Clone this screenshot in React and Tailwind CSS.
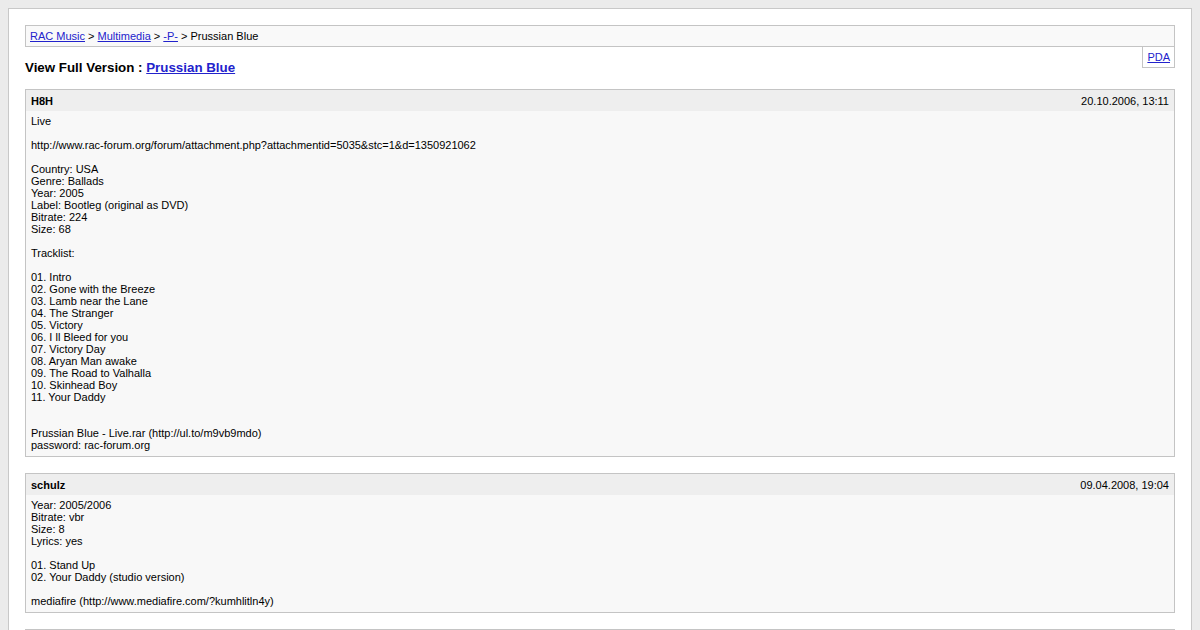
const posts = [
  {
    user: "H8H",
    date: "20.10.2006, 13:11",
    lines: [
      "Live",
      "",
      "http://www.rac-forum.org/forum/attachment.php?attachmentid=5035&stc=1&d=1350921062",
      "",
      "Country: USA",
      "Genre: Ballads",
      "Year: 2005",
      "Label: Bootleg (original as DVD)",
      "Bitrate: 224",
      "Size: 68",
      "",
      "Tracklist:",
      "",
      "01. Intro",
      "02. Gone with the Breeze",
      "03. Lamb near the Lane",
      "04. The Stranger",
      "05. Victory",
      "06. I ll Bleed for you",
      "07. Victory Day",
      "08. Aryan Man awake",
      "09. The Road to Valhalla",
      "10. Skinhead Boy",
      "11. Your Daddy",
      "",
      "",
      "Prussian Blue - Live.rar (http://ul.to/m9vb9mdo)",
      "password: rac-forum.org",
    ],
  },
  {
    user: "schulz",
    date: "09.04.2008, 19:04",
    lines: [
      "Year: 2005/2006",
      "Bitrate: vbr",
      "Size: 8",
      "Lyrics: yes",
      "",
      "01. Stand Up",
      "02. Your Daddy (studio version)",
      "",
      "mediafire (http://www.mediafire.com/?kumhlitln4y)",
    ],
  },
  {
    user: "Pagan",
    date: "10.04.2008, 09:12",
    lines: ["Thanks!"],
  },
];

const Post = ({ post }) => (
  <div className="mb-4 border border-[#c4c4c4] bg-[#f8f8f8]">
    <div className="flex justify-between bg-[#eeeeee] px-[5px] pt-[5px] pb-[3px] text-[11px] leading-[13px]">
      <span className="font-bold">{post.user}</span>
      <span>{post.date}</span>
    </div>
    <div className="px-[5px] pt-[4px] pb-[5px] text-[11px] leading-[12px]">
      {post.lines.map((l, i) => (
        <div key={i} className="h-[12px] whitespace-pre">
          {l}
        </div>
      ))}
    </div>
  </div>
);

export default function App() {
  return (
    <div className="min-h-[630px] bg-[#ebebeb] pt-2 font-['Liberation_Sans',Arial,sans-serif] text-black">
      <div className="mx-2 border border-[#c8c8c8] bg-white p-4">
        <div className="border border-[#c4c4c4] bg-[#f9f9f9] px-1 py-1 text-[11px] leading-[12px]">
          <a href="#" className="text-[#2222cc] underline">RAC Music</a>
          {" > "}
          <a href="#" className="text-[#2222cc] underline">Multimedia</a>
          {" > "}
          <a href="#" className="text-[#2222cc] underline">-P-</a>
          {" > Prussian Blue"}
        </div>
        <div className="flex items-start justify-between">
          <p className="pt-[13px] text-[13.33px] font-bold leading-[15px]">
            View Full Version :{" "}
            <a href="#" className="text-[#2222cc] underline">Prussian Blue</a>
          </p>
          <div className="-mt-px border border-[#c4c4c4] bg-white px-1 py-1 text-[11px] leading-[12px]">
            <a href="#" className="text-[#2222cc] underline">PDA</a>
          </div>
        </div>
        <div className="mt-[14px]">
          {posts.map((p) => (
            <Post key={p.user} post={p} />
          ))}
        </div>
      </div>
    </div>
  );
}
